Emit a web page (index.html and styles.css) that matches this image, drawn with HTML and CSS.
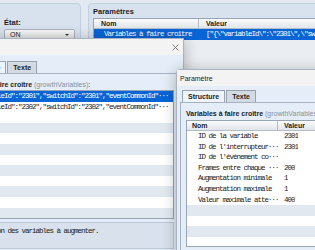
FILE: index.html
```html
<!DOCTYPE html>
<html lang="fr">

<head>
  <meta charset="UTF-8">
  <meta name="viewport" content="width=device-width, initial-scale=1.0">
  <title>Paramètre</title>
  <link rel="stylesheet" href="styles.css">
</head>

<body>
  <!-- éditeur d'événement en arrière-plan -->
  <div class="editor">
    <div class="panel state">
      <div class="caption">État:</div>
      <div class="select"><span>ON</span><span class="caret"></span></div>
    </div>
    <div class="panel params">
      <div class="caption">Paramètres</div>
      <div class="grid grid-params">
        <div class="grid-head">
          <div class="cell name">Nom</div>
          <div class="cell">Valeur</div>
        </div>
        <div class="grid-body">
          <div class="grid-row selected">
            <div class="cell name">Variables à faire croître</div>
            <div class="cell">["{\"variableId\":\"2301\",\"switchId\":\"2301\"}"]</div>
          </div>
        </div>
      </div>
    </div>
  </div>

  <!-- liste growthVariables -->
  <div class="dialog dialog-list">
    <div class="titlebar">
      <span>Paramètre</span>
      <svg class="close" width="7" height="7" viewBox="0 0 7 7">
        <path d="M0.5 0.5 L6.5 6.5 M6.5 0.5 L0.5 6.5" stroke="#666" stroke-width="0.8" />
      </svg>
    </div>
    <div class="dialog-body">
      <div class="tabs">
        <div class="tab active">Liste</div>
        <div class="tab">Texte</div>
      </div>
      <div class="tab-panel">
        <div class="label"><b>Variables à faire croître</b> <span class="hint">(growthVariables)</span>:</div>
        <div class="grid grid-list">
          <div class="grid-body">
            <div class="grid-row selected">
              <div class="cell">{"variableId":"2301","switchId":"2301","eventCommonId"···</div>
            </div>
            <div class="grid-row">
              <div class="cell">{"variableId":"2302","switchId":"2302","eventCommonId"···</div>
            </div>
            <div class="grid-row empty"></div>
            <div class="grid-row empty"></div>
            <div class="grid-row empty"></div>
            <div class="grid-row empty"></div>
            <div class="grid-row empty"></div>
            <div class="grid-row empty"></div>
            <div class="grid-row empty"></div>
            <div class="grid-row empty"></div>
            <div class="grid-row empty"></div>
            <div class="grid-row empty"></div>
            <div class="grid-row empty"></div>
          </div>
        </div>
        <div class="description">Définition des variables à augmenter.</div>
      </div>
    </div>
  </div>

  <!-- structure d'une variable -->
  <div class="dialog dialog-struct">
    <div class="titlebar">
      <span>Paramètre</span>
    </div>
    <div class="dialog-body">
      <div class="tabs">
        <div class="tab active">Structure</div>
        <div class="tab">Texte</div>
      </div>
      <div class="tab-panel">
        <div class="label"><b>Variables à faire croître</b> <span class="hint">(growthVariables)</span>:</div>
        <div class="grid grid-struct">
          <div class="grid-head">
            <div class="cell name">Nom</div>
            <div class="cell">Valeur</div>
          </div>
          <div class="grid-body">
            <div class="grid-row">
              <div class="cell name">ID de la variable</div>
              <div class="cell">2301</div>
            </div>
            <div class="grid-row">
              <div class="cell name">ID de l'interrupteur···</div>
              <div class="cell">2301</div>
            </div>
            <div class="grid-row">
              <div class="cell name">ID de l'événement co···</div>
              <div class="cell"></div>
            </div>
            <div class="grid-row">
              <div class="cell name">Frames entre chaque ···</div>
              <div class="cell">200</div>
            </div>
            <div class="grid-row">
              <div class="cell name">Augmentation minimale</div>
              <div class="cell">1</div>
            </div>
            <div class="grid-row">
              <div class="cell name">Augmentation maximale</div>
              <div class="cell">1</div>
            </div>
            <div class="grid-row">
              <div class="cell name">Valeur maximale atte···</div>
              <div class="cell">400</div>
            </div>
            <div class="grid-row empty"></div>
            <div class="grid-row empty"></div>
            <div class="grid-row empty"></div>
            <div class="grid-row empty"></div>
          </div>
        </div>
      </div>
    </div>
  </div>
</body>

</html>
```

FILE: styles.css
```css
* {
  margin: 0;
  padding: 0;
  box-sizing: border-box;
}

html,
body {
  width: 315px;
  height: 250px;
  overflow: hidden;
}

body {
  position: relative;
  background: #e2e9f2;
  font-family: "Liberation Sans", Arial, sans-serif;
  font-size: 7px;
  color: #1c1c1c;
}

/* éditeur en arrière-plan */
.editor {
  display: flex;
  gap: 7px;
  width: 340px;
  margin-left: -5px;
  padding-top: 3px;
}

.panel {
  height: 70px;
  background: #d8e2ee;
  border: 1px solid #c3cfdd;
  border-radius: 4px;
}

.state {
  width: 86px;
  flex: none;
  padding: 14px 5px 0 8px;
}

.params {
  flex: 1;
  padding: 3px 0 0 4px;
}

.caption {
  font-size: 7.5px;
  font-weight: bold;
  line-height: 10px;
}

.select {
  display: flex;
  align-items: center;
  justify-content: space-between;
  height: 11px;
  margin-top: 1px;
  padding: 0 5px 0 5px;
  background: linear-gradient(#f8f8f8, #e2e2e2);
  border: 1px solid #a8b1bc;
  border-radius: 2px;
}

.caret {
  margin-top: 2px;
  border: 2px solid transparent;
  border-top: 2.5px solid #333;
}

/* listes et tableaux */
.grid {
  overflow: hidden;
  background: #fff;
  border: 1px solid #97a5b5;
}

.grid-head {
  display: flex;
  height: 10px;
  line-height: 9px;
  font-weight: bold;
  background: linear-gradient(#fbfbfb, #e1e5ea);
  border-bottom: 1px solid #b4becb;
}

.grid-head .name {
  border-right: 1px solid #b4becb;
}

.grid-row {
  display: flex;
  height: 10.6px;
  line-height: 10.6px;
  background: #fff;
  font-family: "Liberation Mono", monospace;
  font-size: 7.5px;
  letter-spacing: -1px;
  white-space: nowrap;
}

.grid-row.empty:nth-child(even) {
  background: #e1e8f0;
}

.grid-row.selected {
  background: #0865d6;
  color: #fff;
}

.cell {
  overflow: hidden;
}

.grid-params {
  height: 70px;
  margin-top: 1px;
  background: #eaedf1;
}

.grid-params .cell {
  padding-left: 7px;
}

.grid-params .name {
  width: 105px;
  flex: none;
}

.grid-params .grid-row .name {
  padding-left: 10px;
}

/* fenêtres de dialogue */
.dialog {
  position: absolute;
  display: flex;
  flex-direction: column;
  background: #e5edf8;
  border: 1px solid #a9b3c0;
  box-shadow: 0 2px 14px rgba(0, 0, 0, 0.28);
}

.dialog-list {
  left: -57px;
  top: 38px;
  width: 241px;
  height: 240px;
}

.dialog-struct {
  left: 176px;
  top: 69px;
  width: 170px;
  height: 220px;
  border-radius: 4px 0 0 0;
}

.titlebar {
  display: flex;
  align-items: center;
  justify-content: space-between;
  height: 16px;
  padding: 0 4px 0 3px;
  background: #f3f3f3;
  flex: none;
}

.dialog-body {
  flex: 1;
  padding: 6px 5px 0;
}

.dialog-struct .dialog-body {
  padding: 4px 0 0 3px;
}

.tabs {
  display: flex;
  gap: 1px;
  height: 12px;
}

.dialog-list .tabs {
  margin-left: 29px;
}

.dialog-struct .tabs {
  margin-left: 2px;
}

.tab {
  padding: 0 5px;
  line-height: 11px;
  font-weight: bold;
  background: #d4dae2;
  border: 1px solid #98a2ae;
  border-bottom: none;
}

.tab.active {
  background: #eef4fb;
}

.tab-panel {
  padding: 6px 0 0 5px;
  border: 1px solid #a7b2c0;
  border-bottom: none;
  height: 100%;
}

.dialog-list .tab-panel {
  padding-right: 3px;
}

.label {
  line-height: 10px;
  white-space: nowrap;
}

.hint {
  color: #8a8f96;
}

.grid-list {
  height: 129px;
}

.grid-list .cell {
  padding-left: 13px;
}

.description {
  height: 27px;
  margin-top: 3px;
  padding: 4px 0 0 13px;
  background: #d8e1ec;
  border: 1px solid #bcc8d6;
  font-family: "Liberation Mono", monospace;
  font-size: 7.5px;
  letter-spacing: -1px;
}

.grid-struct {
  height: 127px;
  margin-top: 1px;
}

.grid-struct .cell {
  padding-left: 6px;
}

.grid-struct .name {
  width: 91px;
  flex: none;
  padding-left: 5px;
}

.grid-struct .grid-row .name {
  padding-left: 11px;
}
```
